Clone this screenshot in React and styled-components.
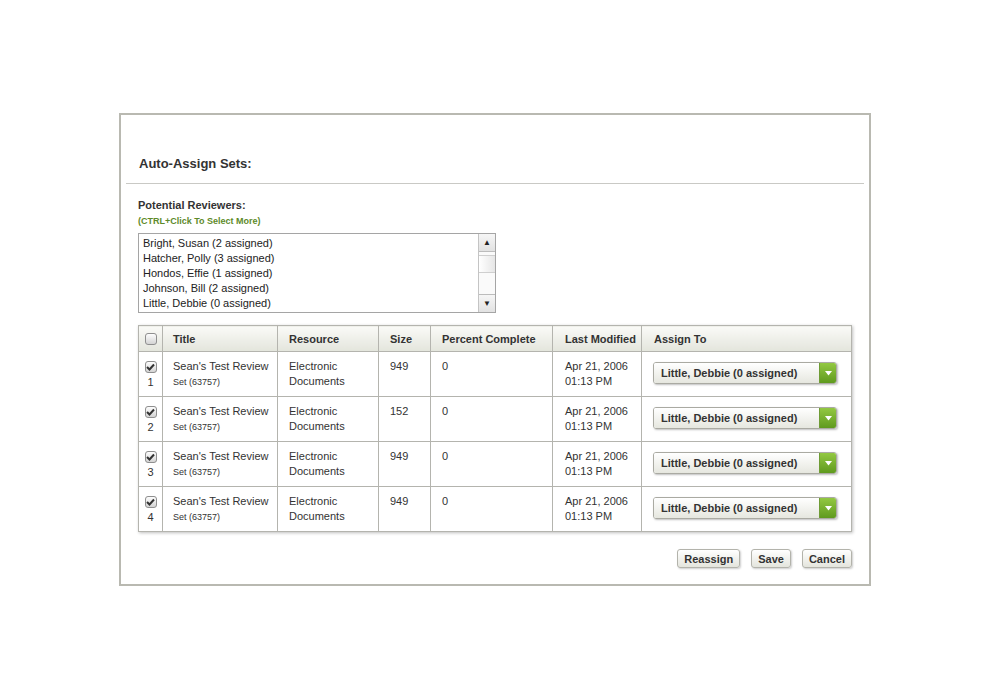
import React from 'react'
import styled, { createGlobalStyle } from 'styled-components'

const Global = createGlobalStyle`
    html, body {
        margin: 0;
        padding: 0;
        background: #ffffff;
        font-family: "Liberation Sans", Arial, sans-serif;
        color: #333333;
    }
`
const Page = styled.div`
    width: 990px;
    height: 699px;
    display: flex;
    align-items: center;
    justify-content: center;
`
const Frame = styled.div`
    box-sizing: border-box;
    width: 752px;
    height: 473px;
    border: 2px solid #b9b9b1;
    display: flex;
    flex-direction: column;
`
const Title = styled.h1`
    margin: 0;
    padding: 41px 18px 11px;
    font-size: 13px;
    line-height: 16px;
    font-weight: bold;
    color: #333333;
`
const Rule = styled.div`
    margin: 0 5px;
    border-top: 1px solid #c9c9c5;
`
const Body = styled.div`
    padding: 14px 17px 0;
    display: flex;
    flex-direction: column;
`
const Label = styled.div`
    font-size: 11px;
    line-height: 14px;
    font-weight: bold;
    color: #333333;
`
const Hint = styled.div`
    margin-top: 3px;
    font-size: 9px;
    line-height: 12px;
    font-weight: bold;
    color: #5e8a2a;
`
const ListBox = styled.div`
    box-sizing: border-box;
    margin-top: 6px;
    width: 358px;
    height: 80px;
    border: 1px solid #a5a5a5;
    display: flex;
`
const Options = styled.div`
    flex: 1;
    padding: 2px 0 0 4px;
    font-size: 11px;
    line-height: 15px;
    color: #222222;
`
const Scroll = styled.div`
    width: 16px;
    border-left: 1px solid #c4c4c4;
    display: flex;
    flex-direction: column;
    background: #fafafa;
`
const ScrollBtn = styled.div`
    height: 17px;
    display: grid;
    place-items: center;
    background: linear-gradient(#f6f6f6, #e2e2e2);
    border-bottom: ${p => (p.$top ? '1px solid #bcbcbc' : 'none')};
    border-top: ${p => (p.$top ? 'none' : '1px solid #bcbcbc')};
    font-size: 8px;
    color: #222222;
`
const Thumb = styled.div`
    height: 16px;
    margin-top: 3px;
    border-top: 1px solid #cfcfcf;
    border-bottom: 1px solid #cfcfcf;
    background: linear-gradient(90deg, #ffffff, #e6e6e6);
`
const Track = styled.div`
    flex: 1;
`
const Table = styled.table`
    margin-top: 12px;
    width: 713px;
    border-collapse: collapse;
    box-shadow: 1px 1px 3px rgba(0, 0, 0, 0.25);
    table-layout: fixed;
`
const Th = styled.th`
    height: 25px;
    padding: 0 0 0 ${p => p.$pad || 11}px;
    text-align: left;
    font-size: 11px;
    font-weight: bold;
    color: #333333;
    background: linear-gradient(#fafaf7, #e3e5dc);
    border: 1px solid #b4b4ae;
`
const Td = styled.td`
    height: 45px;
    padding: 7px 4px 0 ${p => p.$pad || 11}px;
    box-sizing: border-box;
    vertical-align: top;
    font-size: 11px;
    line-height: 15px;
    color: #333333;
    border: 1px solid #b4b4ae;
`
const CheckCell = styled(Td)`
    padding: 9px 0 0 0;
    text-align: center;
    line-height: 13px;
`
const Small = styled.div`
    font-size: 9px;
    line-height: 16px;
`
const Box = styled.div`
    box-sizing: border-box;
    width: 12px;
    height: 12px;
    margin: 0 auto;
    border: 1px solid #8f8f8f;
    border-radius: 3px;
    background: linear-gradient(#fdfdfd, #d4d4d4);
    display: grid;
    place-items: center;
`
const Num = styled.div`
    margin-top: 3px;
    font-size: 11px;
`
const Select = styled.div`
    box-sizing: border-box;
    margin-top: 3px;
    width: 184px;
    height: 22px;
    display: flex;
    border: 1px solid #aaaaa2;
    border-radius: 3px;
    overflow: hidden;
    box-shadow: 1px 1px 2px rgba(0, 0, 0, 0.25);
`
const SelectText = styled.div`
    flex: 1;
    padding-left: 7px;
    display: flex;
    align-items: center;
    font-size: 11px;
    font-weight: bold;
    color: #333333;
    background: linear-gradient(#ffffff, #e6e7df);
`
const SelectArrow = styled.div`
    width: 16px;
    display: grid;
    place-items: center;
    background: linear-gradient(#93c842, #5f9a1e);
    border-left: 1px solid #6f9c35;
`
const Actions = styled.div`
    margin-top: 17px;
    display: flex;
    justify-content: flex-end;
    gap: 11px;
`
const Button = styled.button`
    box-sizing: border-box;
    height: 19px;
    padding: 0 6px;
    border: 1px solid #b3b3ab;
    border-radius: 3px;
    background: linear-gradient(#ffffff, #e4e5dd);
    box-shadow: 1px 1px 2px rgba(0, 0, 0, 0.2);
    font-family: "Liberation Sans", Arial, sans-serif;
    font-size: 11px;
    font-weight: bold;
    color: #333333;
`

const Check = () => (
    <svg width="9" height="8" viewBox="0 0 9 8">
        <path d="M1 4 L3.5 6.5 L8 1.5" fill="none" stroke="#333" strokeWidth="2" />
    </svg>
)

const reviewers = [
    'Bright, Susan (2 assigned)',
    'Hatcher, Polly (3 assigned)',
    'Hondos, Effie (1 assigned)',
    'Johnson, Bill (2 assigned)',
    'Little, Debbie (0 assigned)',
]

const rows = [
    { n: 1, size: 949 },
    { n: 2, size: 152 },
    { n: 3, size: 949 },
    { n: 4, size: 949 },
]

function App() {
    return (
        <Page>
            <Global />
            <Frame>
                <Title>Auto-Assign Sets:</Title>
                <Rule />
                <Body>
                    <Label>Potential Reviewers:</Label>
                    <Hint>(CTRL+Click To Select More)</Hint>
                    <ListBox>
                        <Options>
                            {reviewers.map(r => <div key={r}>{r}</div>)}
                        </Options>
                        <Scroll>
                            <ScrollBtn $top>▲</ScrollBtn>
                            <Thumb />
                            <Track />
                            <ScrollBtn>▼</ScrollBtn>
                        </Scroll>
                    </ListBox>
                    <Table>
                        <colgroup>
                            <col style={{ width: 24 }} />
                            <col style={{ width: 115 }} />
                            <col style={{ width: 101 }} />
                            <col style={{ width: 52 }} />
                            <col style={{ width: 122 }} />
                            <col style={{ width: 89 }} />
                            <col style={{ width: 210 }} />
                        </colgroup>
                        <thead>
                            <tr>
                                <Th $pad={1}><Box /></Th>
                                <Th $pad={10}>Title</Th>
                                <Th>Resource</Th>
                                <Th>Size</Th>
                                <Th>Percent Complete</Th>
                                <Th $pad={12}>Last Modified</Th>
                                <Th $pad={12}>Assign To</Th>
                            </tr>
                        </thead>
                        <tbody>
                            {rows.map(r => (
                                <tr key={r.n}>
                                    <CheckCell>
                                        <Box><Check /></Box>
                                        <Num>{r.n}</Num>
                                    </CheckCell>
                                    <Td $pad={10}>
                                        Sean's Test Review
                                        <Small>Set (63757)</Small>
                                    </Td>
                                    <Td>Electronic<br />Documents</Td>
                                    <Td>{r.size}</Td>
                                    <Td>0</Td>
                                    <Td $pad={12}>Apr 21, 2006<br />01:13 PM</Td>
                                    <Td $pad={11}>
                                        <Select>
                                            <SelectText>Little, Debbie (0 assigned)</SelectText>
                                            <SelectArrow>
                                                <svg width="7" height="5" viewBox="0 0 7 5">
                                                    <path d="M0 0 H7 L3.5 4.5 Z" fill="#ffffff" />
                                                </svg>
                                            </SelectArrow>
                                        </Select>
                                    </Td>
                                </tr>
                            ))}
                        </tbody>
                    </Table>
                    <Actions>
                        <Button>Reassign</Button>
                        <Button>Save</Button>
                        <Button>Cancel</Button>
                    </Actions>
                </Body>
            </Frame>
        </Page>
    )
}
export default App
